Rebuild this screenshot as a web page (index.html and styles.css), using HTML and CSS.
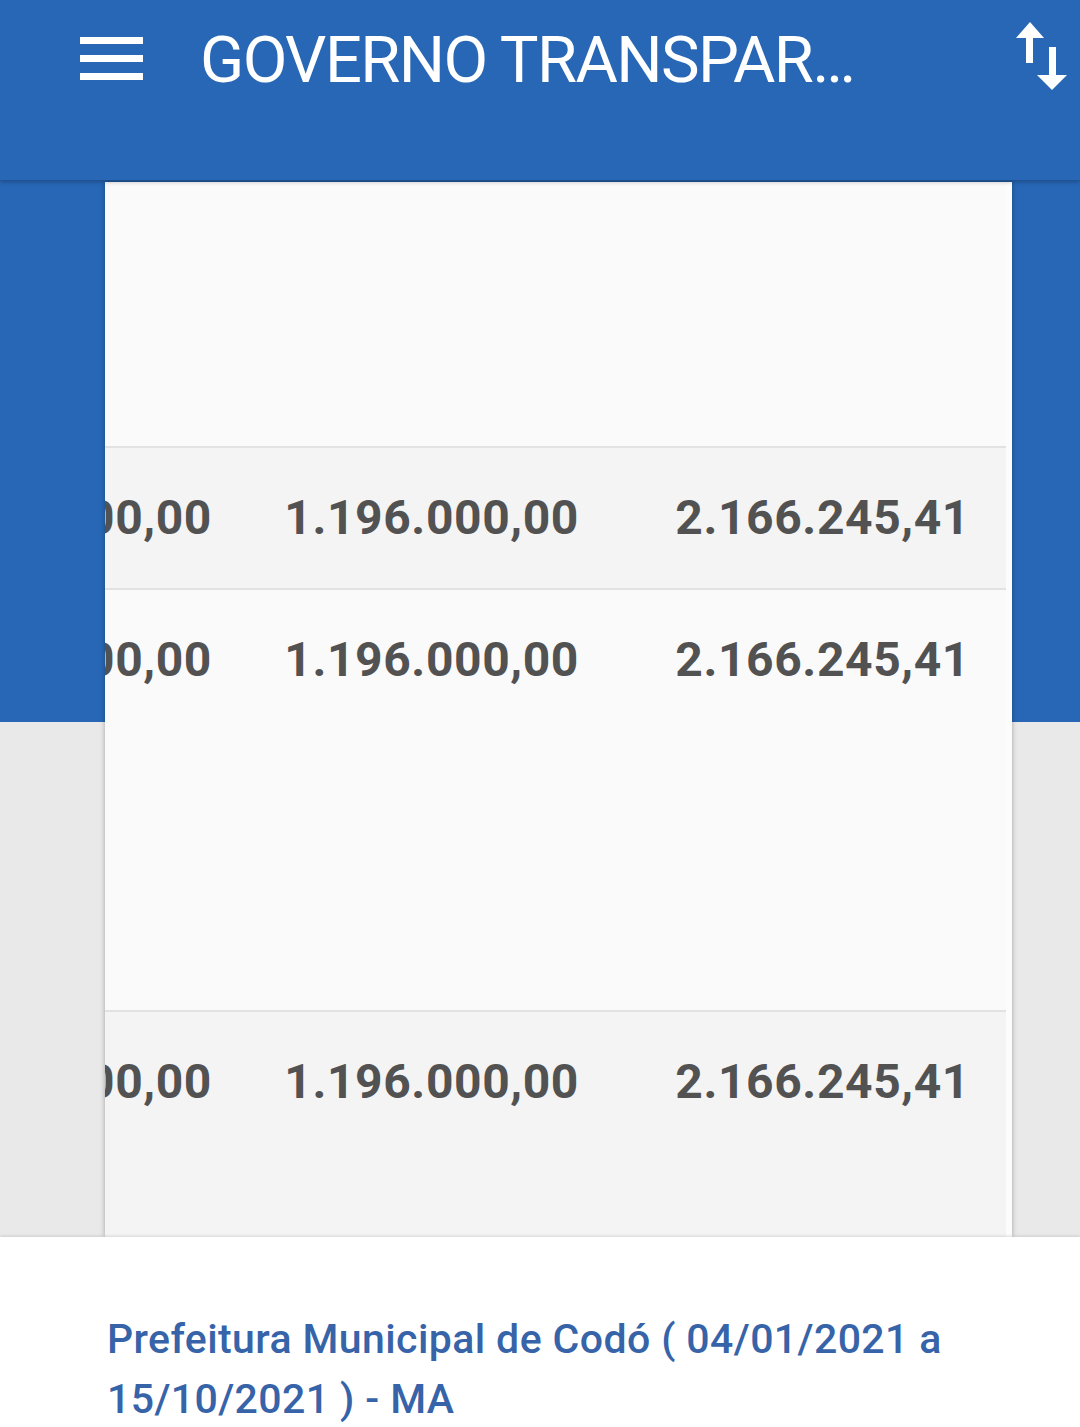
FILE: index.html
```html
<!DOCTYPE html>
<html lang="pt-BR">

<head>
  <meta charset="UTF-8">
  <title>Governo Transparente</title>
  <link rel="stylesheet" href="styles.css">
</head>

<body>
  <header class="appbar">
    <button class="icon-btn menu-btn" aria-label="Menu">
      <svg width="64" height="44" viewBox="0 0 64 44">
        <rect x="0" y="0" width="63" height="7" fill="#fff"/>
        <rect x="0" y="18" width="63" height="7" fill="#fff"/>
        <rect x="0" y="36" width="63" height="7" fill="#fff"/>
      </svg>
    </button>
    <h1 class="title">GOVERNO TRANSPAR…</h1>
    <button class="icon-btn sort-btn" aria-label="Ordenar">
      <svg width="56" height="72" viewBox="1013 20 56 72">
        <polygon points="1016,38 1030,22 1044,38" fill="#fff"/>
        <rect x="1026" y="36" width="7" height="27" fill="#fff"/>
        <rect x="1049" y="47" width="7" height="30" fill="#fff"/>
        <polygon points="1037,75 1052,90 1067,75" fill="#fff"/>
      </svg>
    </button>
  </header>

  <main class="card">
    <div class="row row-head"></div>

    <div class="row row-data shade">
      <span class="cell">970.000,00</span>
      <span class="cell">1.196.000,00</span>
      <span class="cell">2.166.245,41</span>
    </div>

    <div class="row row-data">
      <span class="cell">970.000,00</span>
      <span class="cell">1.196.000,00</span>
      <span class="cell">2.166.245,41</span>
    </div>
    <div class="row row-gap"></div>

    <div class="row row-data shade tall">
      <span class="cell">970.000,00</span>
      <span class="cell">1.196.000,00</span>
      <span class="cell">2.166.245,41</span>
    </div>
  </main>

  <section class="sheet">
    <p class="entity">Prefeitura Municipal de Codó ( 04/01/2021 a 15/10/2021 ) - MA</p>
  </section>
</body>

</html>
```

FILE: styles.css
```css
* {
  margin: 0;
  padding: 0;
  box-sizing: border-box;
  font-family: Roboto, 'Noto Sans', sans-serif;
}

html,
body {
  height: 1427px;
  overflow: hidden;
}

body {
  display: flex;
  flex-direction: column;
  /* blue band behind the top of the card, grey page below */
  background: linear-gradient(#2767b5 0, #2767b5 722px, #e9e9e9 722px);
}

.appbar {
  position: relative;
  z-index: 2;
  height: 180px;
  flex: none;
  display: flex;
  align-items: flex-start;
  background: #2767b5;
  box-shadow: 0 2px 4px rgba(0, 0, 0, 0.25);
  color: white;
}

.icon-btn {
  background: none;
  border: none;
  display: flex;
  cursor: pointer;
}

.menu-btn {
  margin: 37px 0 0 80px;
}

.title {
  margin: 22px 0 0 56px;
  font-size: 65px;
  font-weight: 400;
  letter-spacing: -1.6px;
  white-space: nowrap;
  flex: 1;
}

.sort-btn {
  margin: 20px 11px 0 0;
}

.card {
  flex: none;
  height: 1055px;
  margin: 2px 68px 0 105px;
  padding-right: 6px;
  background: #fcfcfc;
  overflow: hidden;
  box-shadow: 0 0 5px rgba(0, 0, 0, 0.3);
}

.row {
  background: #fafafa;
}

.row-head {
  height: 264px;
}

.row-data {
  height: 142px;
  display: grid;
  grid-template-columns: 143px 367px 1fr;
  align-items: center;
}

.row-data.shade {
  background: #f4f4f4;
  border-top: 2px solid #e2e2e2;
}

.row-data.shade + .row-data {
  border-top: 2px solid #e2e2e2;
}

/* last row runs on under the bottom sheet */
.row-data.tall {
  height: 300px;
  align-items: start;
  padding-top: 42px;
}

.row-gap {
  height: 280px;
}

.cell {
  display: flex;
  justify-content: flex-end;
  white-space: nowrap;
  padding-right: 36px;
  font-size: 48px;
  line-height: 56px;
  font-weight: 700;
  letter-spacing: 0.6px;
  color: #525252;
}

.sheet {
  flex: 1;
  position: relative;
  z-index: 2;
  background: #fff;
  box-shadow: 0 -1px 3px rgba(0, 0, 0, 0.12);
  padding: 72px 100px 0 107px;
}

.entity {
  font-size: 41px;
  font-weight: 500;
  line-height: 60px;
  letter-spacing: 0.4px;
  color: #3763a8;
}
```
